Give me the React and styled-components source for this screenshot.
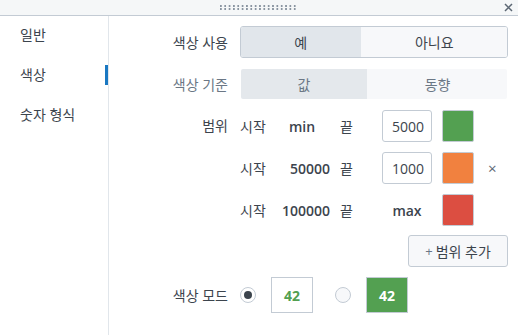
import React from "react";
import styled, { createGlobalStyle } from "styled-components";

const GlobalStyle = createGlobalStyle`
  html, body {
    margin: 0;
    padding: 0;
    background: #fff;
  }
  body {
    font-family: "Open Sans", "Noto Sans CJK KR", sans-serif;
    font-size: 14px;
    color: #3c444d;
  }
`;

const Panel = styled.div`
  width: 518px;
  height: 335px;
  display: flex;
  flex-direction: column;
  overflow: hidden;
`;

const Header = styled.div`
  height: 15px;
  flex: 0 0 15px;
  background: #f5f7f8;
  border-bottom: 1px solid #c3cbd4;
  display: flex;
  align-items: center;
  justify-content: center;
  position: relative;
`;

const DragHandle = styled.div`
  width: 78px;
  height: 5px;
  margin-top: -1px;
  background-image: linear-gradient(90deg, #8a95a1 2px, transparent 2px),
    linear-gradient(90deg, #8a95a1 2px, transparent 2px);
  background-size: 4.35px 2px, 4.35px 2px;
  background-position: 0 0, 0 3px;
  background-repeat: repeat-x;
`;

const CloseButton = styled.div`
  position: absolute;
  right: 5px;
  top: 0;
  height: 15px;
  display: flex;
  align-items: center;
  color: #5c6773;
`;

const Body = styled.div`
  flex: 1;
  display: flex;
`;

const Sidebar = styled.nav`
  width: 108px;
  flex: 0 0 108px;
  border-right: 1px solid #e1e6eb;
  display: flex;
  flex-direction: column;
  margin-top: -2px;
`;

const NavItem = styled.div`
  height: 40px;
  display: flex;
  align-items: center;
  padding-left: 20px;
  font-size: 14px;
  color: #3c444d;
  position: relative;

  ${({ $active }) =>
    $active &&
    `
    &::after {
      content: "";
      position: absolute;
      right: 0;
      top: 11px;
      width: 3px;
      height: 20px;
      background: #1a78c2;
    }
  `}
`;

const Content = styled.div`
  flex: 1;
  display: flex;
  flex-direction: column;
  gap: 10px;
  padding: 10px 10px 0 0;
`;

const FormRow = styled.div`
  display: grid;
  grid-template-columns: 119px 1fr;
  column-gap: 12px;
  align-items: ${({ $top }) => ($top ? "start" : "center")};
`;

const Label = styled.div`
  text-align: right;
  font-size: 14px;
  color: ${({ $muted }) => ($muted ? "#6b7785" : "#3c444d")};
  line-height: ${({ $top }) => ($top ? "32px" : "normal")};
`;

const Toggle = styled.div`
  display: flex;
  height: 32px;
  box-sizing: border-box;
  border: 1px solid ${({ $disabled }) => ($disabled ? "transparent" : "#c3cbd4")};
  border-radius: 3px;
  overflow: hidden;
`;

const ToggleOption = styled.div`
  flex: 1 1 auto;
  display: flex;
  align-items: center;
  justify-content: center;
  font-size: 14px;
  color: ${({ $disabled }) => ($disabled ? "#6b7785" : "#3c444d")};
  background: ${({ $selected, $disabled }) =>
    $selected ? ($disabled ? "#e4e8ec" : "#e1e6eb") : "#f7f8fa"};
  & + & {
    border-left: 1px solid ${({ $disabled }) => ($disabled ? "transparent" : "#c3cbd4")};
  }
`;

const Ranges = styled.div`
  display: flex;
  flex-direction: column;
  gap: 10px;
`;

const RangeRow = styled.div`
  display: flex;
  align-items: center;
  height: 32px;
`;

const RangeWord = styled.span`
  width: ${({ $w }) => $w}px;
  flex: 0 0 auto;
`;

const RangeValue = styled.span`
  width: 66px;
  flex: 0 0 auto;
  text-align: ${({ $align }) => $align || "right"};
  font-weight: 600;
  padding-right: 10px;
  box-sizing: border-box;
  margin-left: 8px;
`;

const EndSlot = styled.div`
  width: 50px;
  height: 32px;
  flex: 0 0 auto;
  display: flex;
  align-items: center;
  justify-content: center;
  margin-left: 28px;
  font-weight: 600;
`;

const NumberInput = styled.input`
  width: 50px;
  height: 32px;
  box-sizing: border-box;
  border: 1px solid #c3cbd4;
  border-radius: 3px;
  padding: 0 7px 0 9px;
  font-family: "Open Sans", sans-serif;
  font-size: 14px;
  color: #3c444d;
  background: #fff;
  outline: none;
`;

const Swatch = styled.div`
  width: 32px;
  height: 32px;
  box-sizing: border-box;
  border: 1px solid #c3cbd4;
  border-radius: 2px;
  background: ${({ $color }) => $color};
  margin-left: 10px;
  flex: 0 0 auto;
`;

const RemoveButton = styled.span`
  margin-left: 14px;
  color: #5c6773;
  font-size: 15px;
`;

const AddRow = styled.div`
  display: flex;
  justify-content: flex-end;
  margin-top: -1px;
`;

const Button = styled.button`
  width: 100px;
  height: 32px;
  border: 1px solid #c3cbd4;
  border-radius: 3px;
  background: #f7f8fa;
  font-family: "Open Sans", "Noto Sans CJK KR", sans-serif;
  font-size: 14px;
  color: #3c444d;
  cursor: pointer;
  display: flex;
  align-items: center;
  justify-content: center;
  gap: 3px;
`;

const Plus = styled.span`
  color: #6b7785;
  font-size: 13px;
`;

const ModeOptions = styled.div`
  display: flex;
  align-items: center;
  height: 36px;
`;

const Radio = styled.span`
  width: 16px;
  height: 16px;
  box-sizing: border-box;
  border-radius: 50%;
  border: 1px solid #c3cbd4;
  background: ${({ $checked }) => ($checked ? "#fff" : "#f7f8fa")};
  display: flex;
  align-items: center;
  justify-content: center;
  margin-left: ${({ $first }) => ($first ? "0" : "22px")};
  &::after {
    content: "";
    width: 8px;
    height: 8px;
    border-radius: 50%;
    background: ${({ $checked }) => ($checked ? "#3c444d" : "transparent")};
  }
`;

const Preview = styled.div`
  width: 42px;
  height: 36px;
  box-sizing: border-box;
  border: 1px solid #c3cbd4;
  margin-left: 15px;
  display: flex;
  align-items: center;
  justify-content: center;
  font-weight: 700;
  font-size: 14px;
  background: ${({ $filled }) => ($filled ? "#53a051" : "#fff")};
  color: ${({ $filled }) => ($filled ? "#fff" : "#53a051")};
`;

const ranges = [
  { from: "min", to: "50000", color: "#53a051" },
  { from: "50000", to: "100000", color: "#f1813f", removable: true },
  { from: "100000", to: null, color: "#dc4e41" },
];

const App = () => {
  return (
    <>
      <GlobalStyle />
      <Panel>
        <Header>
          <DragHandle />
          <CloseButton>
            <svg width="9" height="9" viewBox="0 0 9 9">
              <path d="M1 1L8 8M8 1L1 8" stroke="#5c6773" strokeWidth="1.5" />
            </svg>
          </CloseButton>
        </Header>
        <Body>
          <Sidebar>
            <NavItem>일반</NavItem>
            <NavItem $active>색상</NavItem>
            <NavItem>숫자 형식</NavItem>
          </Sidebar>
          <Content>
            <FormRow>
              <Label>색상 사용</Label>
              <Toggle>
                <ToggleOption $selected>예</ToggleOption>
                <ToggleOption>아니요</ToggleOption>
              </Toggle>
            </FormRow>
            <FormRow>
              <Label $muted>색상 기준</Label>
              <Toggle $disabled>
                <ToggleOption $selected $disabled>값</ToggleOption>
                <ToggleOption $disabled>동향</ToggleOption>
              </Toggle>
            </FormRow>
            <FormRow $top>
              <Label $top>범위</Label>
              <Ranges>
                {ranges.map((r) => (
                  <RangeRow key={r.from}>
                    <RangeWord $w={26}>시작</RangeWord>
                    <RangeValue $align={r.from === "min" ? "center" : "right"}>
                      {r.from}
                    </RangeValue>
                    <RangeWord $w={14}>끝</RangeWord>
                    <EndSlot>
                      {r.to ? <NumberInput readOnly value={r.to} /> : "max"}
                    </EndSlot>
                    <Swatch $color={r.color} />
                    {r.removable && <RemoveButton>×</RemoveButton>}
                  </RangeRow>
                ))}
                <AddRow>
                  <Button>
                    <Plus>+</Plus>범위 추가
                  </Button>
                </AddRow>
              </Ranges>
            </FormRow>
            <FormRow>
              <Label>색상 모드</Label>
              <ModeOptions>
                <Radio $checked $first />
                <Preview>42</Preview>
                <Radio />
                <Preview $filled>42</Preview>
              </ModeOptions>
            </FormRow>
          </Content>
        </Body>
      </Panel>
    </>
  );
};

export default App;
